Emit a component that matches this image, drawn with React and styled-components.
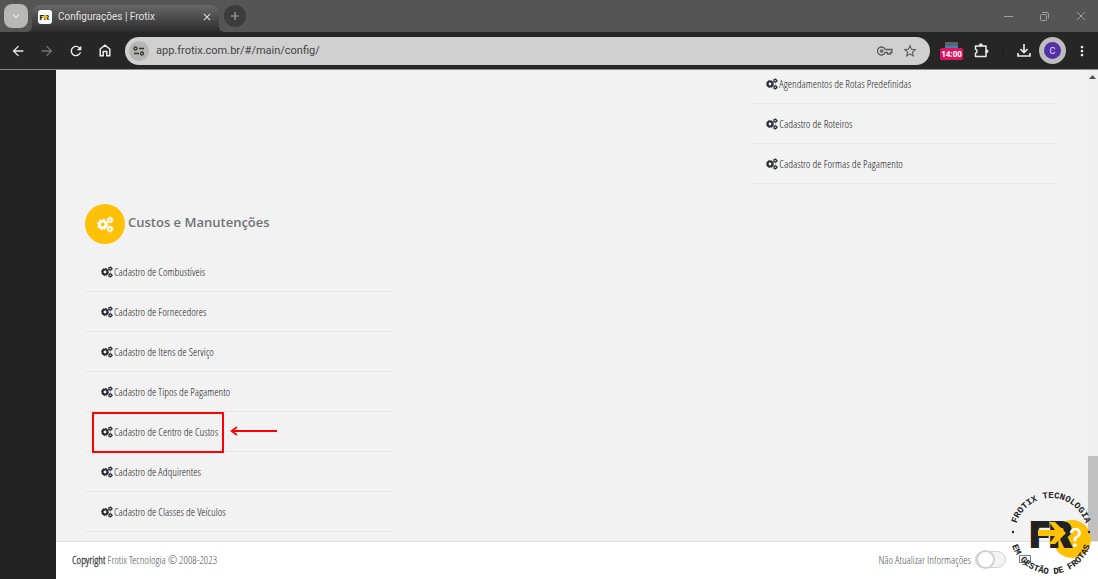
import React from 'react';
import styled, { createGlobalStyle } from 'styled-components';
import {
  MdArrowBack,
  MdArrowForward,
  MdRefresh,
  MdClose,
  MdAdd,
  MdExpandMore,
  MdStarBorder,
  MdMoreVert,
} from 'react-icons/md';

const uiFont = 'Roboto, "Open Sans", sans-serif';
const pageFont = '"Open Sans Condensed Light", "Open Sans Condensed", "Liberation Sans Narrow", sans-serif';

const GlobalStyle = createGlobalStyle`
  * {
    box-sizing: border-box;
  }

  body {
    margin: 0;
    background: #f2f2f2;
    font-family: ${pageFont};
    font-weight: 300;
  }

  button {
    border: none;
    padding: 0;
    background: none;
    font: inherit;
    color: inherit;
  }
`;

const Window = styled.div`
  display: flex;
  flex-direction: column;
  height: 100vh;
  overflow: hidden;
`;

const TabStrip = styled.header`
  display: flex;
  align-items: flex-end;
  flex: none;
  height: 32px;
  padding: 0 4px;
  background: #555;
`;

const TabSearch = styled.button`
  display: flex;
  align-items: center;
  justify-content: center;
  width: 24px;
  height: 24px;
  margin-bottom: 4px;
  border-radius: 8px;
  background: #b8b8b6;
  color: #e6e6e6;
  font-size: 14px;
`;

const Tab = styled.div`
  position: relative;
  display: flex;
  align-items: center;
  gap: 6px;
  width: 187px;
  height: 27px;
  margin-left: 4px;
  padding: 0 6px 4px;
  border-radius: 8px 8px 0 0;
  background: linear-gradient(#686868, #2c2c2c);
  color: #e4e4e4;
  font: 10px ${uiFont};

  &::before,
  &::after {
    content: '';
    position: absolute;
    bottom: 0;
    width: 6px;
    height: 6px;
  }

  &::before {
    right: 100%;
    background: radial-gradient(circle at 0 0, transparent 6px, #323232 6px);
  }

  &::after {
    left: 100%;
    background: radial-gradient(circle at 100% 0, transparent 6px, #323232 6px);
  }
`;

const TabTitle = styled.span`
  flex: 1;
`;

const TabClose = styled.button`
  display: flex;
  font-size: 12px;
`;

const NewTab = styled.button`
  display: flex;
  align-items: center;
  justify-content: center;
  width: 22px;
  height: 22px;
  margin: 0 0 5px 5px;
  border-radius: 50%;
  background: #3c3c3c;
  color: #a8a8a8;
  font-size: 14px;
`;

const WindowControls = styled.div`
  display: flex;
  gap: 27px;
  height: 32px;
  margin-left: auto;
  padding-right: 8px;
  align-items: center;
`;

const WindowButton = styled.button`
  display: flex;
  color: #a0a0a0;
`;

const Toolbar = styled.nav`
  display: flex;
  align-items: center;
  flex: none;
  height: 38px;
  padding: 0 7px 0 9px;
  background: #262626;
  border-bottom: 1px solid #8c8c8c;
`;

const ToolButton = styled.button`
  display: flex;
  align-items: center;
  justify-content: center;
  width: ${(props) => props.$narrow ? '18px' : '29px'};
  height: 28px;
  color: ${(props) => props.$muted ? '#747474' : '#ededed'};
  font-size: 16px;
`;

const NavButtons = styled.div`
  display: flex;
  margin-left: -6px;
`;

const AddressBar = styled.div`
  display: flex;
  align-items: center;
  flex: 1;
  height: 28px;
  margin: 0 10px 0 6px;
  padding: 0 11px 0 4px;
  gap: 7px;
  border-radius: 14px;
  background: #d0d0d0;
  color: #5a5a5a;
`;

const SiteInfo = styled.button`
  display: flex;
  align-items: center;
  justify-content: center;
  width: 20px;
  height: 20px;
  border-radius: 50%;
  background: #b5b5b3;
  color: #333;
`;

const AddressInput = styled.input`
  flex: 1;
  min-width: 0;
  border: none;
  padding: 0;
  outline: none;
  background: none;
  color: #444;
  font: 11px ${uiFont};
`;

const BarButton = styled.button`
  display: flex;
  justify-content: center;
  width: 18px;
  font-size: 16px;
`;

const TimerButton = styled.button`
  display: flex;
  flex-direction: column;
  align-items: center;
  width: 23px;
  height: 18px;
  margin-right: 4px;
`;

const TimerBadge = styled.span`
  width: 23px;
  border-radius: 2px;
  background: #e0145f;
  color: #fff;
  font: bold 8px/12px "Open Sans", sans-serif;
  text-align: center;
`;

const Divider = styled.span`
  width: 1px;
  height: 12px;
  margin: 0 6px;
  background: #1c1c1c;
`;

const Avatar = styled.button`
  display: flex;
  align-items: center;
  justify-content: center;
  width: 27px;
  height: 27px;
  margin: 0 7px 0 1px;
  border: 5px solid #bdbdbd;
  border-radius: 50%;
  background: #5430a8;
  color: #e6dcfa;
  font: 9px ${uiFont};
`;

const Body = styled.div`
  display: flex;
  flex: 1;
  min-height: 0;
`;

const Sidebar = styled.aside`
  flex: none;
  width: 56px;
  background: #222;
`;

const Main = styled.div`
  position: relative;
  display: flex;
  flex: 1;
  flex-direction: column;
  min-width: 0;
`;

const Viewport = styled.div`
  display: flex;
  flex: 1;
  min-height: 0;
`;

const Content = styled.main`
  display: flex;
  flex: 1;
  flex-direction: column;
  justify-content: flex-end;
  gap: 20px;
  overflow: hidden;
  padding: 0 30px 9px 29px;
  background: #f2f2f2;
`;

const Columns = styled.div`
  display: grid;
  grid-template-columns: repeat(3, 1fr);
  gap: 26px;
`;

const Group = styled.section`
  grid-column: ${(props) => props.$column};
`;

const GroupHeader = styled.header`
  display: flex;
  align-items: center;
  gap: 3px;
  height: 40px;
  margin-bottom: 8px;
`;

const GroupIcon = styled.span`
  display: flex;
  align-items: center;
  justify-content: center;
  width: 40px;
  height: 40px;
  border-radius: 50%;
  background: #ffc107;
  color: #fff;
`;

const GroupTitle = styled.h2`
  margin: 0 0 4px;
  color: #6f7275;
  font: 600 13px "Open Sans", sans-serif;
`;

const List = styled.ul`
  margin: 0;
  padding: 0;
  list-style: none;
`;

const Item = styled.li`
  position: relative;
  display: flex;
  align-items: center;
  height: 40px;
  padding-left: 16px;
  border-bottom: 1px solid #e8e8e8;
`;

const ItemLink = styled.a`
  display: flex;
  align-items: center;
  gap: 1px;
  color: #17191c;
  font-size: 11px;
  text-decoration: none;
  white-space: nowrap;

  svg {
    color: #2c2f36;
  }
`;

const Highlight = styled.span`
  position: absolute;
  top: 0;
  left: 7px;
  width: 132px;
  height: 41px;
  border: 2px solid #fb0007;
  pointer-events: none;
`;

const Arrow = styled.svg`
  position: absolute;
  top: 13px;
  left: 145px;
`;

const Scrollbar = styled.div`
  display: flex;
  flex-direction: column;
  align-items: center;
  justify-content: space-between;
  width: 11px;
  padding-top: 5px;
  background: #f0f0f0;
`;

const Thumb = styled.div`
  width: 10px;
  height: 85px;
  margin-left: 1px;
  background: #c0c0c0;
`;

const Footer = styled.footer`
  display: flex;
  align-items: center;
  justify-content: space-between;
  flex: none;
  height: 38px;
  padding: 0 67px 2px 16px;
  border-top: 1px solid #e2e2e2;
  background: #fff;
  color: #4c4f52;
  font-size: 11px;

  strong {
    font-weight: 700;
    font-family: "Open Sans Condensed Light", sans-serif;
  }
`;

const FooterActions = styled.div`
  display: flex;
  align-items: center;
`;

const SwitchLabel = styled.label`
  display: flex;
  align-items: center;
  gap: 4px;
`;

const Switch = styled.input`
  appearance: none;
  display: flex;
  align-items: center;
  flex: none;
  width: 31px;
  height: 17px;
  margin: 0;
  border: 1px solid #d2d2d2;
  border-radius: 9px;
  background: #f3f3f3;

  &::before {
    content: '';
    width: 15px;
    height: 15px;
    border: 2px solid #d0d0d0;
    border-radius: 50%;
    background: #fff;
  }
`;

const ScreenButton = styled.button`
  display: flex;
  margin-left: 13px;
`;

const Badge = styled.svg`
  position: absolute;
  right: 2px;
  bottom: 0;
`;

const generalItems = [
  'Agendamentos de Rotas Predefinidas',
  'Cadastro de Roteiros',
  'Cadastro de Formas de Pagamento',
];

const costItems = [
  'Cadastro de Combustíveis',
  'Cadastro de Fornecedores',
  'Cadastro de Itens de Serviço',
  'Cadastro de Tipos de Pagamento',
  'Cadastro de Centro de Custos',
  'Cadastro de Adquirentes',
  'Cadastro de Classes de Veículos',
];

const Cogs = ({ size = 12 }) => (
  <svg width={size} height={size} viewBox="0 0 24 24" fill="none" stroke="currentColor">
    <circle cx="8" cy="12" r="4.8" strokeWidth="4" />
    <circle cx="8" cy="12" r="7" strokeWidth="2" strokeDasharray="2.75 2.75" />
    <circle cx="18.5" cy="5.5" r="2.6" strokeWidth="2.6" />
    <circle cx="18.5" cy="5.5" r="4.2" strokeWidth="1.4" strokeDasharray="2.2 2.2" />
    <circle cx="18.5" cy="18.5" r="2.6" strokeWidth="2.6" />
    <circle cx="18.5" cy="18.5" r="4.2" strokeWidth="1.4" strokeDasharray="2.2 2.2" />
  </svg>
);

const MenuList = ({ items, highlighted }) => (
  <List>
    {items.map((item) => (
      <Item key={item}>
        <ItemLink href="#/main/config/">
          <Cogs />
          {item}
        </ItemLink>
        {item === highlighted && (
          <>
            <Highlight />
            <Arrow width="48" height="12" viewBox="0 0 48 12">
              <path d="M2 6H47" stroke="#fb0007" strokeWidth="2" />
              <path d="M7 2L1.5 6L7 10" fill="none" stroke="#fb0007" strokeWidth="1.6" />
            </Arrow>
          </>
        )}
      </Item>
    ))}
  </List>
);

const Favicon = () => (
  <svg width="14" height="14" viewBox="0 0 14 14">
    <rect width="14" height="14" rx="3" fill="#fff" />
    <text x="1.5" y="10" fontFamily="Roboto, sans-serif" fontWeight="900" fontSize="8" fill="#222">FR</text>
    <path d="M4 7H8M7 5L9 7L7 9" fill="none" stroke="#ffc107" strokeWidth="1.4" />
  </svg>
);

const HomeIcon = () => (
  <svg width="12" height="13" viewBox="0 0 12 13" fill="none" stroke="currentColor" strokeWidth="1.5">
    <path d="M1.2 5L6 1.2L10.8 5V11.8H7.8V7.5H4.2V11.8H1.2Z" />
  </svg>
);

const TuneIcon = () => (
  <svg width="12" height="10" viewBox="0 0 12 10" fill="none" stroke="currentColor" strokeWidth="1.3">
    <circle cx="2.5" cy="2.5" r="1.5" />
    <path d="M6 2.5H11M1 7.5H6" />
    <circle cx="9" cy="7.5" r="1.5" />
  </svg>
);

const KeyIcon = () => (
  <svg width="16" height="10" viewBox="0 0 16 10" fill="none" stroke="currentColor" strokeWidth="1.3">
    <path d="M8.2 3.5A4 4 0 1 0 8.2 6.5H10.5V8H13.5V6.5H15V3.5Z" />
    <circle cx="4.7" cy="5" r="1.2" />
  </svg>
);

const PuzzleIcon = () => (
  <svg width="15" height="15" viewBox="0 0 15 15" fill="none" stroke="currentColor" strokeWidth="1.5">
    <path d="M1.5 3H12V13.5H1.5V10.2A2 2 0 0 0 1.5 6.3Z" strokeLinejoin="round" />
    <path d="M5.2 3V2.2A1.6 1.6 0 0 1 8.4 2.2V3ZM12 6.6H12.6A1.6 1.6 0 0 1 12.6 9.8H12Z" fill="currentColor" strokeWidth="0.5" />
  </svg>
);

const DownloadIcon = () => (
  <svg width="14" height="13" viewBox="0 0 14 13" fill="none" stroke="currentColor" strokeWidth="1.6">
    <path d="M7 0V8M3.5 5L7 8.5L10.5 5M1 9V12H13V9" />
  </svg>
);

const FrotixBadge = () => (
  <Badge width="90" height="92" viewBox="0 0 90 92" role="img" aria-label="Frotix Tecnologia">
    <defs>
      <path id="badge-top" d="M9 47A36 36 0 0 1 81 47" />
      <path id="badge-bottom" d="M4 46A41 41 0 0 0 86 46" />
    </defs>
    <circle cx="66" cy="52" r="19" fill="#ffc107" />
    <g fontFamily="Liberation Mono, monospace" fontWeight="bold" fontSize="9" fill="#222" textAnchor="middle">
      <text><textPath href="#badge-top" startOffset="50%">FROTIX TECNOLOGIA</textPath></text>
      <text><textPath href="#badge-bottom" startOffset="50%">EM GESTÃO DE FROTAS</textPath></text>
    </g>
    <circle cx="7" cy="45" r="1.2" fill="#222" />
    <circle cx="83" cy="45" r="1.2" fill="#222" />
    <text x="24" y="60" fontFamily="Roboto, sans-serif" fontWeight="900" fontSize="35" fill="#222" stroke="#222" strokeWidth="2">FR</text>
    <text x="63" y="60" fontFamily="Inter, sans-serif" fontWeight="500" fontSize="25" fill="#fff">?</text>
    <path d="M32 43H49L43 35H49L60 46L49 57H43L49 49H32Z" fill="#ffc107" />
  </Badge>
);

const App = () => (
  <>
    <GlobalStyle />
    <Window>
      <TabStrip>
        <TabSearch aria-label="Pesquisar guias"><MdExpandMore /></TabSearch>
        <Tab>
          <Favicon />
          <TabTitle>Configurações | Frotix</TabTitle>
          <TabClose aria-label="Fechar guia"><MdClose /></TabClose>
        </Tab>
        <NewTab aria-label="Nova guia"><MdAdd /></NewTab>
        <WindowControls>
          <WindowButton aria-label="Minimizar">
            <svg width="9" height="9" viewBox="0 0 9 9" stroke="currentColor"><path d="M0 4.5H9" /></svg>
          </WindowButton>
          <WindowButton aria-label="Restaurar">
            <svg width="9" height="9" viewBox="0 0 9 9" fill="none" stroke="currentColor">
              <rect x="0.5" y="2.5" width="6" height="6" rx="1" />
              <path d="M2.5 0.5H7A1.5 1.5 0 0 1 8.5 2V6.5" />
            </svg>
          </WindowButton>
          <WindowButton aria-label="Fechar">
            <svg width="10" height="10" viewBox="0 0 10 10" stroke="currentColor"><path d="M1 1L9 9M9 1L1 9" /></svg>
          </WindowButton>
        </WindowControls>
      </TabStrip>

      <Toolbar>
        <NavButtons>
          <ToolButton aria-label="Voltar"><MdArrowBack /></ToolButton>
          <ToolButton aria-label="Avançar" $muted><MdArrowForward /></ToolButton>
          <ToolButton aria-label="Recarregar"><MdRefresh /></ToolButton>
          <ToolButton aria-label="Página inicial"><HomeIcon /></ToolButton>
        </NavButtons>
        <AddressBar>
          <SiteInfo aria-label="Informações do site"><TuneIcon /></SiteInfo>
          <AddressInput aria-label="Endereço" defaultValue="app.frotix.com.br/#/main/config/" />
          <BarButton aria-label="Senhas"><KeyIcon /></BarButton>
          <BarButton aria-label="Favoritar"><MdStarBorder /></BarButton>
        </AddressBar>
        <TimerButton>
          <svg width="13" height="6" viewBox="0 0 13 6">
            <rect width="13" height="4" fill="#5d6266" />
            <rect y="4" width="13" height="2" fill="#3b82c4" />
          </svg>
          <TimerBadge>14:00</TimerBadge>
        </TimerButton>
        <ToolButton aria-label="Extensões"><PuzzleIcon /></ToolButton>
        <Divider />
        <ToolButton aria-label="Downloads"><DownloadIcon /></ToolButton>
        <Avatar aria-label="Perfil">C</Avatar>
        <ToolButton aria-label="Menu" $narrow><MdMoreVert /></ToolButton>
      </Toolbar>

      <Body>
        <Sidebar />
        <Main>
          <Viewport>
            <Content>
              <Columns>
                <Group $column={3}>
                  <MenuList items={generalItems} />
                </Group>
              </Columns>
              <Columns>
                <Group $column={1}>
                  <GroupHeader>
                    <GroupIcon><Cogs size={17} /></GroupIcon>
                    <GroupTitle>Custos e Manutenções</GroupTitle>
                  </GroupHeader>
                  <MenuList items={costItems} highlighted="Cadastro de Centro de Custos" />
                </Group>
              </Columns>
            </Content>
            <Scrollbar>
              <svg width="7" height="4" viewBox="0 0 7 4"><path d="M0 4L3.5 0L7 4Z" fill="#505050" /></svg>
              <Thumb />
            </Scrollbar>
          </Viewport>
          <Footer>
            <span><strong>Copyright</strong> Frotix Tecnologia © 2008-2023</span>
            <FooterActions>
              <SwitchLabel>
                Não Atualizar Informações
                <Switch type="checkbox" role="switch" />
              </SwitchLabel>
              <ScreenButton aria-label="Tela cheia">
                <svg width="12" height="10" viewBox="0 0 12 10" fill="none" stroke="#777">
                  <path d="M0.5 0.5H11.5V7.5H0.5ZM3 9.5H8" />
                </svg>
              </ScreenButton>
            </FooterActions>
          </Footer>
          <FrotixBadge />
        </Main>
      </Body>
    </Window>
  </>
);

export default App;
